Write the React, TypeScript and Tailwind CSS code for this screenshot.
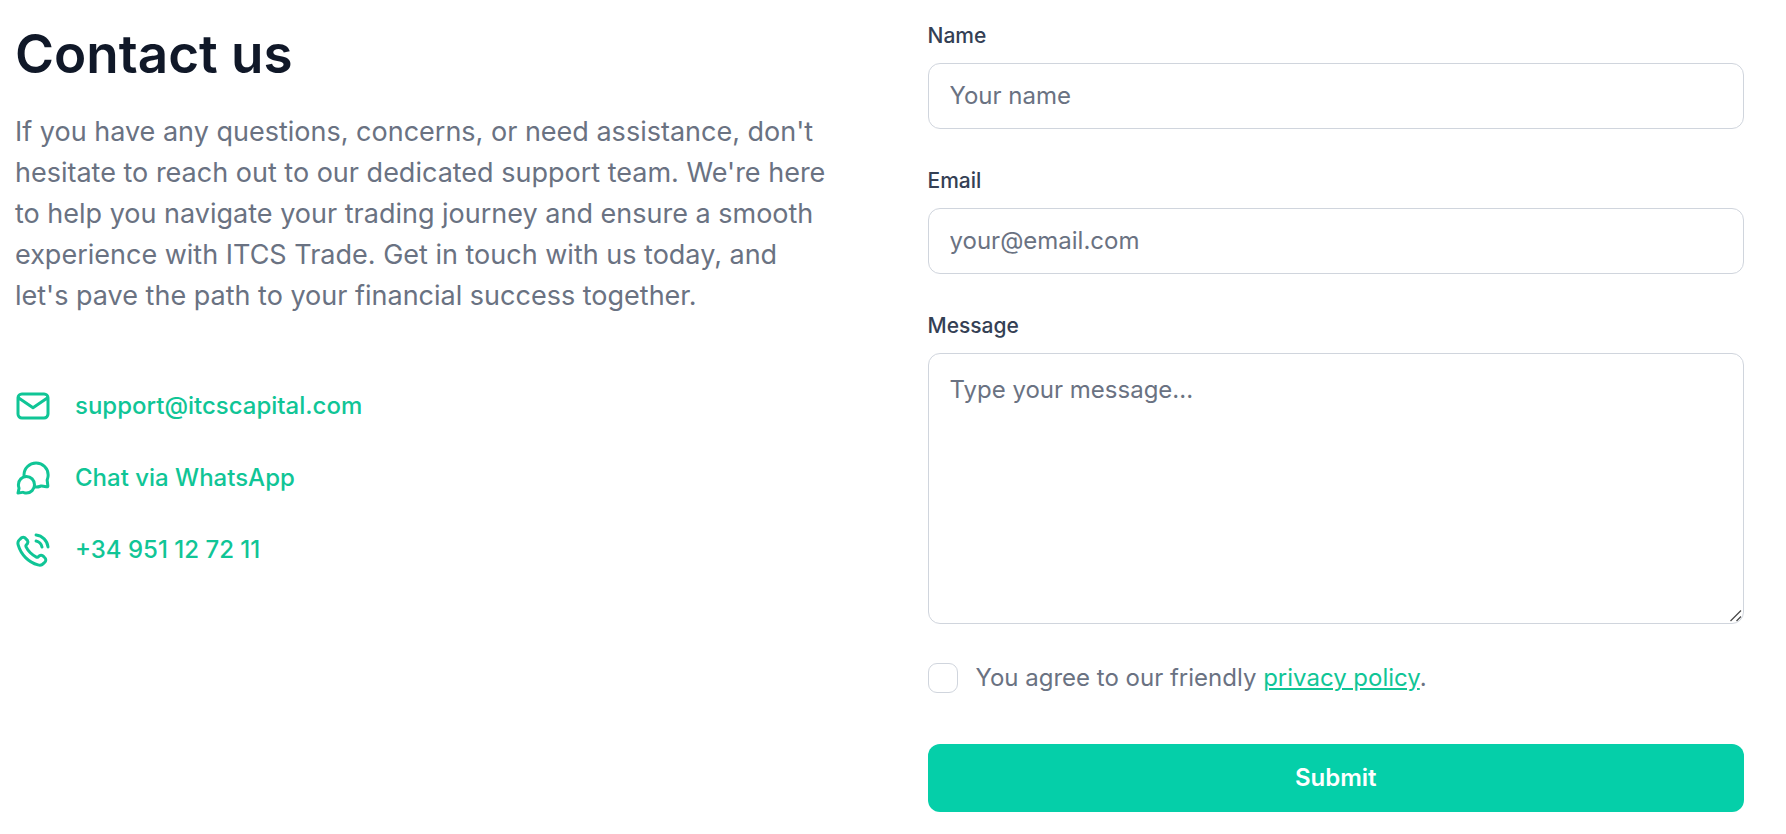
import React from "react";

const inputClass =
  "block w-full rounded-xl border border-[#d0d5dd] bg-white px-[21px] text-2xl text-gray-900 placeholder:text-gray-500 placeholder:opacity-100 focus:outline-2 focus:outline-[#05cfa9]";
const labelClass = "text-[21px] leading-[31px] font-medium text-[#344054]";

function Icon({ path }: { path: string }) {
  return (
    <svg
      className="size-9 shrink-0"
      viewBox="0 0 24 24"
      fill="none"
      stroke="currentColor"
      strokeWidth="2"
      strokeLinecap="round"
      strokeLinejoin="round"
      aria-hidden="true"
    >
      <path d={path} />
    </svg>
  );
}

// contact links
const links = [
  {
    href: "mailto:support@itcscapital.com",
    label: "support@itcscapital.com",
    path: "M22 6.4L12 13.2L2 6.4M4.6 4H19.4C20.8 4 22 5.2 22 6.6V17.4C22 18.8 20.8 20 19.4 20H4.6C3.2 20 2 18.8 2 17.4V6.6C2 5.2 3.2 4 4.6 4Z",
  },
  {
    href: "https://wa.me/34951127211",
    label: "Chat via WhatsApp",
    path: "M6.09436 11.2288C6.03221 10.8282 5.99996 10.4179 5.99996 10C5.99996 5.58172 9.60525 2 14.0526 2C18.4999 2 22.1052 5.58172 22.1052 10C22.1052 10.9981 21.9213 11.9535 21.5852 12.8345C21.5154 13.0175 21.4804 13.109 21.4646 13.1804C21.4489 13.2512 21.4428 13.301 21.4411 13.3735C21.4394 13.4466 21.4493 13.5272 21.4692 13.6883L21.8717 16.9585C21.9153 17.3125 21.9371 17.4895 21.8782 17.6182C21.8266 17.731 21.735 17.8205 21.6211 17.8695C21.4911 17.9254 21.3146 17.8995 20.9617 17.8478L17.7765 17.3809C17.6101 17.3565 17.527 17.3443 17.4512 17.3448C17.3763 17.3452 17.3245 17.3507 17.2511 17.3661C17.177 17.3817 17.0823 17.4172 16.893 17.4881C16.0097 17.819 15.0524 18 14.0526 18C13.6344 18 13.2237 17.9683 12.8227 17.9073M7.63158 22C10.5965 22 13 19.5376 13 16.5C13 13.4624 10.5965 11 7.63158 11C4.66668 11 2.26316 13.4624 2.26316 16.5C2.26316 17.1106 2.36028 17.6979 2.53955 18.2467C2.61533 18.4787 2.65322 18.5947 2.66566 18.6739C2.67864 18.7567 2.68091 18.8031 2.67608 18.8867C2.67145 18.9668 2.65141 19.0573 2.61134 19.2383L2 22L4.9948 21.591C5.15827 21.5687 5.24 21.5575 5.31137 21.558C5.38652 21.5585 5.42641 21.5626 5.50011 21.5773C5.5701 21.5912 5.67416 21.6279 5.88227 21.7014C6.43059 21.8949 7.01911 22 7.63158 22Z",
  },
  {
    href: "tel:+34951127211",
    label: "+34 951 12 72 11",
    path: "M14.0497 6C15.0264 6.19057 15.924 6.66826 16.6277 7.37194C17.3314 8.07561 17.8091 8.97326 17.9997 9.95M14.0497 2C16.0789 2.22544 17.9713 3.13417 19.4159 4.57701C20.8606 6.01984 21.7717 7.91101 21.9997 9.94M10.2266 13.8631C9.02506 12.6615 8.07627 11.3028 7.38028 9.85323C7.32041 9.72854 7.29048 9.66619 7.26748 9.5873C7.18576 9.30695 7.24446 8.96269 7.41447 8.72526C7.46231 8.65845 7.51947 8.60129 7.63378 8.48698C7.98338 8.13737 8.15819 7.96257 8.27247 7.78679C8.70347 7.1239 8.70347 6.26932 8.27247 5.60643C8.15819 5.43065 7.98338 5.25585 7.63378 4.90624L7.43891 4.71137C6.90747 4.17993 6.64174 3.91421 6.35636 3.76987C5.7888 3.4828 5.11854 3.4828 4.55098 3.76987C4.2656 3.91421 3.99987 4.17993 3.46843 4.71137L3.3108 4.86901C2.78117 5.39863 2.51636 5.66344 2.31411 6.02348C2.08969 6.42298 1.92833 7.04347 1.9297 7.5017C1.93092 7.91464 2.01103 8.19687 2.17124 8.76131C3.03221 11.7947 4.65668 14.6571 7.04466 17.045C9.43264 19.433 12.295 21.0575 15.3284 21.9185C15.8928 22.0787 16.1751 22.1588 16.588 22.16C17.0462 22.1614 17.6667 22 18.0662 21.7756C18.4263 21.5733 18.6911 21.3085 19.2207 20.7789L19.3783 20.6213C19.9098 20.0898 20.1755 19.8241 20.3198 19.5387C20.6069 18.9712 20.6069 18.3009 20.3198 17.7333C20.1755 17.448 19.9098 17.1822 19.3783 16.6508L19.1835 16.4559C18.8339 16.1063 18.6591 15.9315 18.4833 15.8172C17.8204 15.3862 16.9658 15.3862 16.3029 15.8172C16.1271 15.9315 15.9523 16.1063 15.6027 16.4559C15.4884 16.5702 15.4313 16.6274 15.3644 16.6752C15.127 16.8453 14.7828 16.904 14.5024 16.8222C14.4235 16.7992 14.3612 16.7693 14.2365 16.7094C12.7869 16.0134 11.4282 15.0646 10.2266 13.8631Z",
  },
];

export default function App() {
  return (
    <main className="grid gap-x-24 gap-y-12 bg-white pt-5 pr-[42px] pb-5 pl-[15px] font-['Inter',sans-serif] lg:grid-cols-2">
      {/* Intro and contact links */}
      <section className="pt-px">
        <h1 className="text-[53px] leading-[66px] font-semibold text-[#101828]">
          Contact us
        </h1>
        <p className="mt-6 text-[27px] leading-[41px] text-gray-500">
          If you have any questions, concerns, or need assistance, don't
          hesitate to reach out to our dedicated support team. We're here to
          help you navigate your trading journey and ensure a smooth experience
          with ITCS Trade. Get in touch with us today, and let's pave the path
          to your financial success together.
        </p>
        <ul className="mt-18 flex flex-col gap-9">
          {links.map((link) => (
            <li key={link.label}>
              <a
                href={link.href}
                className="inline-flex items-center gap-6 align-top text-2xl leading-9 font-medium text-[#10c596]"
              >
                <Icon path={link.path} />
                {link.label}
              </a>
            </li>
          ))}
        </ul>
      </section>

      {/* Contact form */}
      <form
        className="flex flex-col gap-9"
        onSubmit={(e) => e.preventDefault()}
      >
        <div className="flex flex-col gap-3">
          <label htmlFor="name" className={labelClass}>
            Name
          </label>
          <input
            id="name"
            type="text"
            placeholder="Your name"
            className={`${inputClass} h-[66px] pb-0.5`}
          />
        </div>
        <div className="flex flex-col gap-3">
          <label htmlFor="email" className={labelClass}>
            Email
          </label>
          <input
            id="email"
            type="email"
            placeholder="your@email.com"
            className={`${inputClass} h-[66px] pb-0.5`}
          />
        </div>
        <div className="flex flex-col gap-3">
          <label htmlFor="message" className={labelClass}>
            Message
          </label>
          <div className="relative">
            <textarea
              id="message"
              placeholder="Type your message..."
              className={`${inputClass} h-[271px] resize-y py-[18px] leading-9 [&::-webkit-resizer]:hidden`}
            />
            {/* resize grip */}
            <svg
              className="pointer-events-none absolute right-0.5 bottom-0.5 size-3"
              viewBox="0 0 12 12"
              fill="none"
              stroke="#4b4b4b"
              strokeWidth="1.3"
              aria-hidden="true"
            >
              <path d="M0.5 11L11 0.5M6.5 11L11 6.5" />
            </svg>
          </div>
        </div>
        <div className="flex items-center gap-[18px]">
          <input
            id="privacy"
            type="checkbox"
            className="size-[30px] shrink-0 appearance-none rounded-[9px] border border-[#d0d5dd] bg-white checked:border-[#05cfa9] checked:bg-[#05cfa9]"
          />
          <label htmlFor="privacy" className="text-2xl leading-9 text-gray-500">
            You agree to our friendly{" "}
            <a href="#privacy-policy" className="text-[#10c596] underline">
              privacy policy
            </a>
            .
          </label>
        </div>
        <button
          type="submit"
          className="mt-3 h-[68px] rounded-xl bg-[#05cfa9] text-2xl font-semibold text-white"
        >
          Submit
        </button>
      </form>
    </main>
  );
}
